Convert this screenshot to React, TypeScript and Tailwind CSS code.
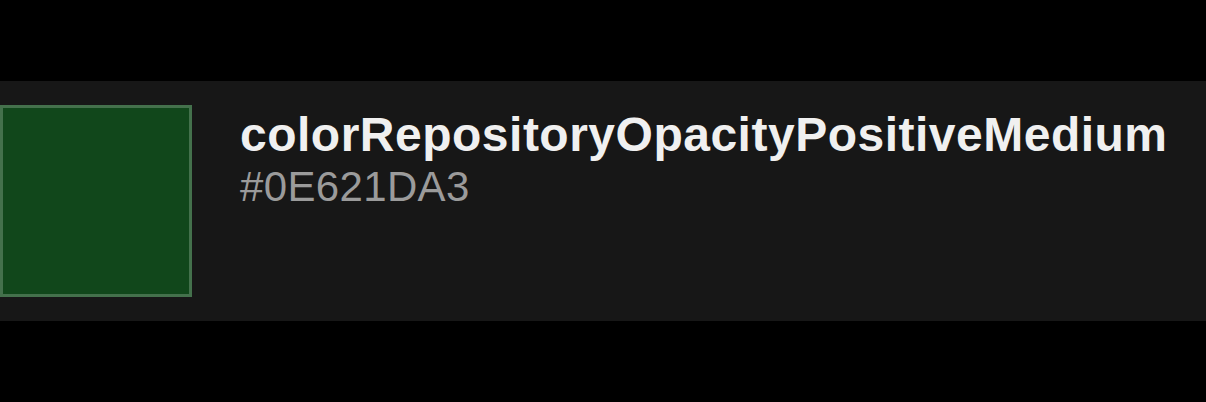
export default function App() {
  return (
    <div className="w-[1206px] h-[402px] bg-black pt-[81px]">
      <div className="h-[240px] bg-[#171717] flex items-start py-[24px] gap-[48px]">
        <div className="w-[192px] h-[192px] shrink-0 bg-[#11471b] border-[3px] border-[#44714c]" />
        <div className="flex flex-col pt-[6px]" style={{ fontFamily: '"Liberation Sans", Arial, sans-serif' }}>
          <div className="text-[48px] leading-[48px] font-bold text-[#f0f0f0] tracking-[0.5px]">
            colorRepositoryOpacityPositiveMedium
          </div>
          <div className="mt-[7px] text-[42px] leading-[42px] text-[#9b9b9b] tracking-[0.35px]">#0E621DA3</div>
        </div>
      </div>
    </div>
  );
}
